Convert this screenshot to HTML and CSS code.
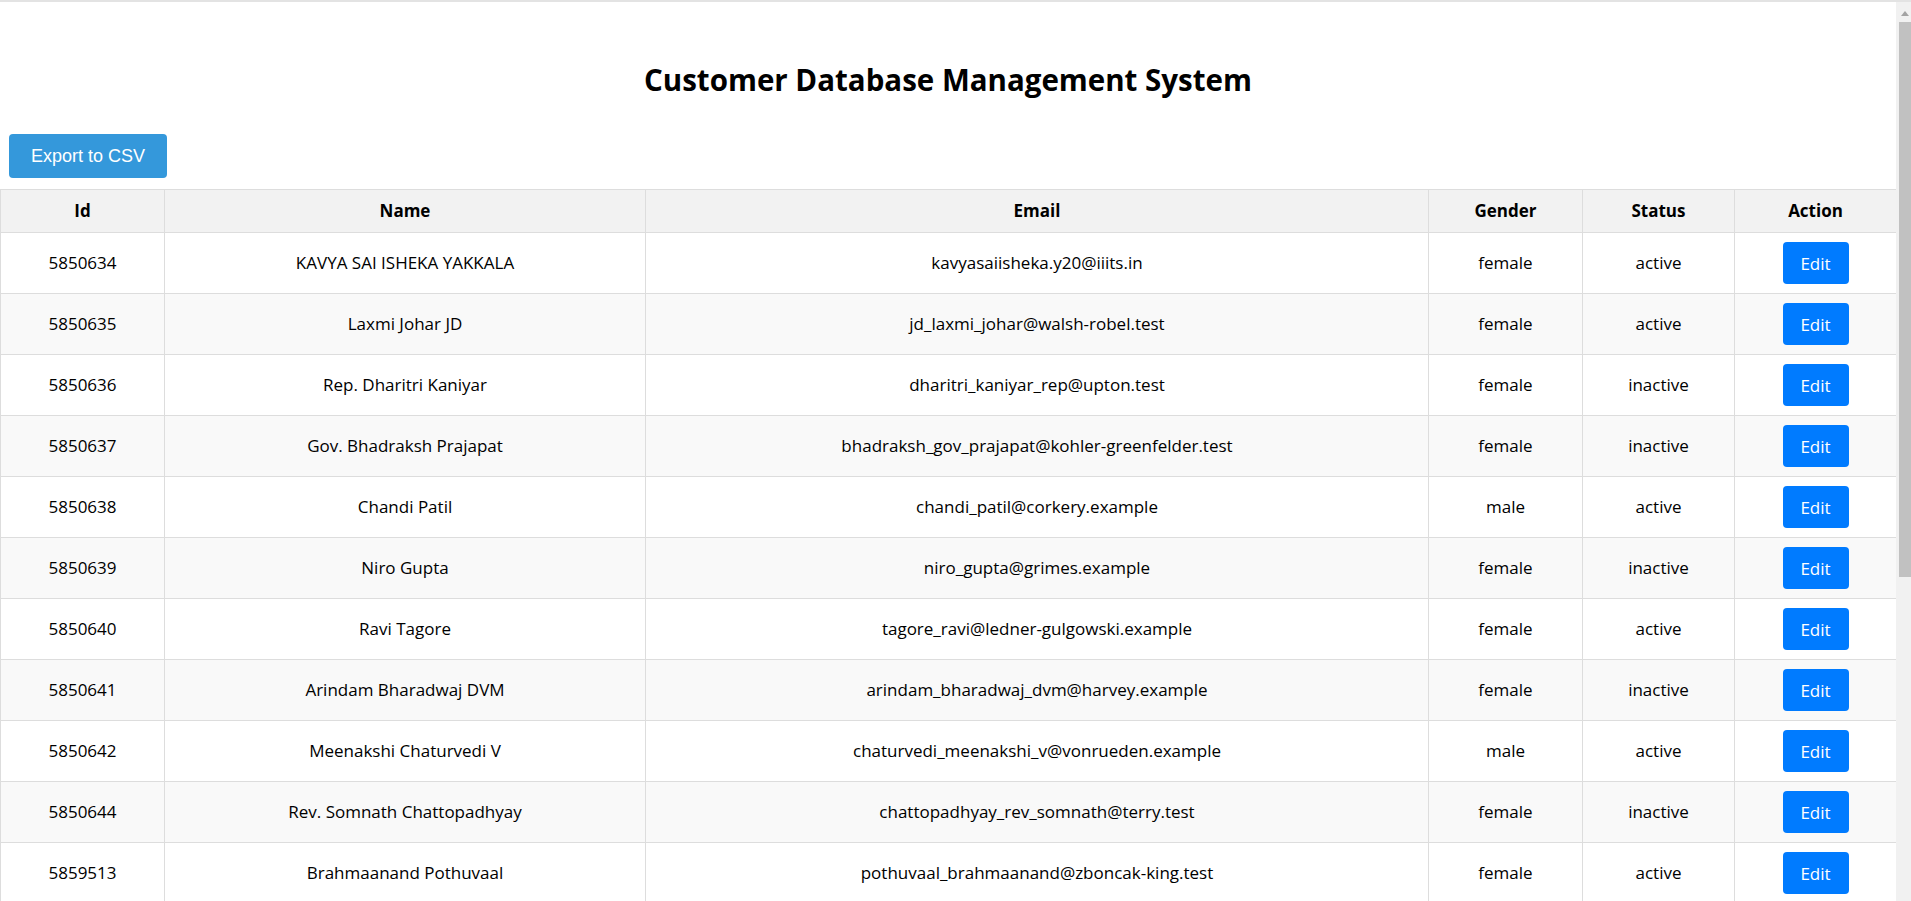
FILE: index.html
```html
<!DOCTYPE html>
<html lang="en">
<head>
<meta charset="utf-8">
<title>Customer Database Management System</title>
<link rel="stylesheet" href="styles.css">
</head>
<body>
<div class="page">
  <h1 class="title">Customer Database Management System</h1>
  <button class="export-btn">Export to CSV</button>
  <table class="customers">
    <colgroup>
      <col class="c-id"><col class="c-name"><col class="c-email"><col class="c-gender"><col class="c-status"><col class="c-action">
    </colgroup>
    <thead>
      <tr><th>Id</th><th>Name</th><th>Email</th><th>Gender</th><th>Status</th><th>Action</th></tr>
    </thead>
    <tbody>
      <tr><td>5850634</td><td>KAVYA SAI ISHEKA YAKKALA</td><td>kavyasaiisheka.y20@iiits.in</td><td>female</td><td>active</td><td><button class="edit-btn">Edit</button></td></tr>
      <tr><td>5850635</td><td>Laxmi Johar JD</td><td>jd_laxmi_johar@walsh-robel.test</td><td>female</td><td>active</td><td><button class="edit-btn">Edit</button></td></tr>
      <tr><td>5850636</td><td>Rep. Dharitri Kaniyar</td><td>dharitri_kaniyar_rep@upton.test</td><td>female</td><td>inactive</td><td><button class="edit-btn">Edit</button></td></tr>
      <tr><td>5850637</td><td>Gov. Bhadraksh Prajapat</td><td>bhadraksh_gov_prajapat@kohler-greenfelder.test</td><td>female</td><td>inactive</td><td><button class="edit-btn">Edit</button></td></tr>
      <tr><td>5850638</td><td>Chandi Patil</td><td>chandi_patil@corkery.example</td><td>male</td><td>active</td><td><button class="edit-btn">Edit</button></td></tr>
      <tr><td>5850639</td><td>Niro Gupta</td><td>niro_gupta@grimes.example</td><td>female</td><td>inactive</td><td><button class="edit-btn">Edit</button></td></tr>
      <tr><td>5850640</td><td>Ravi Tagore</td><td>tagore_ravi@ledner-gulgowski.example</td><td>female</td><td>active</td><td><button class="edit-btn">Edit</button></td></tr>
      <tr><td>5850641</td><td>Arindam Bharadwaj DVM</td><td>arindam_bharadwaj_dvm@harvey.example</td><td>female</td><td>inactive</td><td><button class="edit-btn">Edit</button></td></tr>
      <tr><td>5850642</td><td>Meenakshi Chaturvedi V</td><td>chaturvedi_meenakshi_v@vonrueden.example</td><td>male</td><td>active</td><td><button class="edit-btn">Edit</button></td></tr>
      <tr><td>5850644</td><td>Rev. Somnath Chattopadhyay</td><td>chattopadhyay_rev_somnath@terry.test</td><td>female</td><td>inactive</td><td><button class="edit-btn">Edit</button></td></tr>
      <tr><td>5859513</td><td>Brahmaanand Pothuvaal</td><td>pothuvaal_brahmaanand@zboncak-king.test</td><td>female</td><td>active</td><td><button class="edit-btn">Edit</button></td></tr>
    </tbody>
  </table>
</div>
<div class="scrollbar" aria-hidden="true">
  <div class="scroll-arrow"></div>
  <div class="scroll-thumb"></div>
</div>
</body>
</html>
```
FILE: styles.css
```css
html, body {
  margin: 0;
  padding: 0;
}
body {
  font-family: "Open Sans", "Noto Sans", sans-serif;
  color: #000;
  background: #fff;
  border-top: 2px solid #e3e3e3;
}
.page {
  margin-right: 15px;
  padding-bottom: 20px;
}
.title {
  margin: 58px 0 34px;
  font-size: 29.5px;
  line-height: 40px;
  font-weight: 700;
  text-align: center;
}
.export-btn {
  display: block;
  margin: 0 0 11px 9px;
  padding: 12px 22px;
  font-family: "Liberation Sans", Arial, sans-serif;
  font-size: 18px;
  line-height: 20px;
  color: #fff;
  background: #3498db;
  border: none;
  border-radius: 4px;
}
.customers {
  width: 100%;
  table-layout: fixed;
  border-collapse: collapse;
  font-size: 17px;
}
.c-id { width: 164px; }
.c-name { width: 481px; }
.c-email { width: 783px; }
.c-gender { width: 154px; }
.c-status { width: 152px; }
.c-action { width: 162px; }
.customers th,
.customers td {
  border: 1px solid #ddd;
  text-align: center;
  vertical-align: middle;
}
.customers th {
  background: #f2f2f2;
  font-weight: 700;
  padding: 10px 8px;
  line-height: 22px;
}
.customers td {
  padding: 9px 8px;
  line-height: 22px;
  height: 42px;
  box-sizing: content-box;
}
.customers tbody tr:nth-child(even) td {
  background: #f9f9f9;
}
.edit-btn {
  display: inline-block;
  vertical-align: middle;
  width: 66px;
  height: 42px;
  padding: 0;
  font-family: "Open Sans", "Noto Sans", sans-serif;
  font-size: 17px;
  color: #fff;
  background: #007bff;
  border: none;
  border-radius: 4px;
}
.scrollbar {
  position: fixed;
  top: 2px;
  right: 0;
  bottom: 0;
  width: 15px;
  background: #f1f1f1;
  display: flex;
  flex-direction: column;
  align-items: flex-end;
}
.scroll-arrow {
  width: 0;
  height: 0;
  margin: 9px 2px 6px 0;
  border-left: 4px solid transparent;
  border-right: 4px solid transparent;
  border-bottom: 5px solid #a3a3a3;
}
.scroll-thumb {
  width: 12px;
  height: 555px;
  background: #c1c1c1;
}
```
